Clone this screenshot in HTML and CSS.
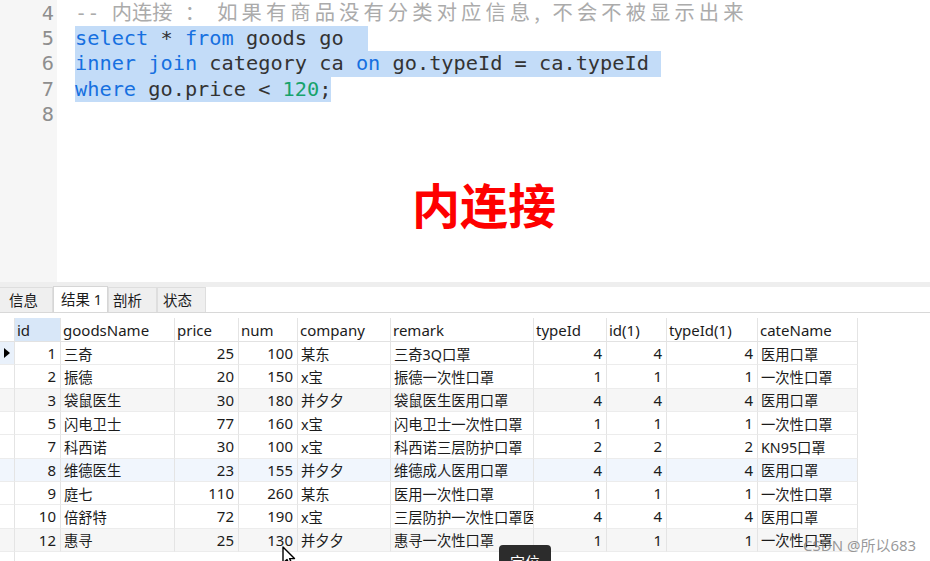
FILE: index.html
```html
<!DOCTYPE html>
<html lang="zh-CN">
<head>
<meta charset="utf-8">
<title>内连接</title>
<link rel="stylesheet" href="styles.css">
</head>
<body>
<div class="app">
  <div class="editor">
    <div class="gutter">
      <div class="ln">4</div>
      <div class="ln">5</div>
      <div class="ln">6</div>
      <div class="ln">7</div>
      <div class="ln">8</div>
    </div>
    <div class="code">
      <div class="line"><span class="cm">-- <span class="cj">内连接</span> ： <span class="cj wide">如果有商品没有分类对应信息, 不会不被显示出来</span></span></div>
      <div class="line"><span class="sel"><span class="kw">select</span> * <span class="kw">from</span> goods go  </span></div>
      <div class="line"><span class="sel"><span class="kw">inner</span> <span class="kw">join</span> category ca <span class="kw">on</span> go.typeId = ca.typeId </span></div>
      <div class="line"><span class="sel"><span class="kw">where</span> go.price &lt; <span class="num">120</span>;</span></div>
      <div class="line"> </div>
    </div>
  </div>
  <div class="splitter"></div>
  <div class="tabbar">
    <div class="tab t1">信息</div>
    <div class="tab t2 active">结果 1</div>
    <div class="tab t3">剖析</div>
    <div class="tab t4">状态</div>
  </div>
  <div class="results">
    <div class="grid">
      <div class="h ind"></div>
      <div class="h hid">id</div>
      <div class="h">goodsName</div>
      <div class="h">price</div>
      <div class="h">num</div>
      <div class="h">company</div>
      <div class="h">remark</div>
      <div class="h">typeId</div>
      <div class="h">id(1)</div>
      <div class="h">typeId(1)</div>
      <div class="h">cateName</div>

      <div class="c ind cur"><svg class="arrow" width="6" height="10" viewBox="0 0 6 10"><path d="M0 0 L6 5 L0 10 Z" fill="#000"/></svg></div>
      <div class="c r">1</div><div class="c">三奇</div><div class="c r">25</div><div class="c r">100</div><div class="c">某东</div><div class="c">三奇3Q口罩</div><div class="c r">4</div><div class="c r">4</div><div class="c r">4</div><div class="c">医用口罩</div>

      <div class="c ind"></div>
      <div class="c r">2</div><div class="c">振德</div><div class="c r">20</div><div class="c r">150</div><div class="c">x宝</div><div class="c">振德一次性口罩</div><div class="c r">1</div><div class="c r">1</div><div class="c r">1</div><div class="c">一次性口罩</div>

      <div class="c ind g"></div>
      <div class="c r g">3</div><div class="c g">袋鼠医生</div><div class="c r g">30</div><div class="c r g">180</div><div class="c g">并夕夕</div><div class="c g">袋鼠医生医用口罩</div><div class="c r g">4</div><div class="c r g">4</div><div class="c r g">4</div><div class="c g">医用口罩</div>

      <div class="c ind"></div>
      <div class="c r">5</div><div class="c">闪电卫士</div><div class="c r">77</div><div class="c r">160</div><div class="c">x宝</div><div class="c">闪电卫士一次性口罩</div><div class="c r">1</div><div class="c r">1</div><div class="c r">1</div><div class="c">一次性口罩</div>

      <div class="c ind"></div>
      <div class="c r">7</div><div class="c">科西诺</div><div class="c r">30</div><div class="c r">100</div><div class="c">x宝</div><div class="c">科西诺三层防护口罩</div><div class="c r">2</div><div class="c r">2</div><div class="c r">2</div><div class="c">KN95口罩</div>

      <div class="c ind b"></div>
      <div class="c r b">8</div><div class="c b">维德医生</div><div class="c r b">23</div><div class="c r b">155</div><div class="c b">并夕夕</div><div class="c b">维德成人医用口罩</div><div class="c r b">4</div><div class="c r b">4</div><div class="c r b">4</div><div class="c b">医用口罩</div>

      <div class="c ind"></div>
      <div class="c r">9</div><div class="c">庭七</div><div class="c r">110</div><div class="c r">260</div><div class="c">某东</div><div class="c">医用一次性口罩</div><div class="c r">1</div><div class="c r">1</div><div class="c r">1</div><div class="c">一次性口罩</div>

      <div class="c ind"></div>
      <div class="c r">10</div><div class="c">倍舒特</div><div class="c r">72</div><div class="c r">190</div><div class="c">x宝</div><div class="c">三层防护一次性口罩医</div><div class="c r">4</div><div class="c r">4</div><div class="c r">4</div><div class="c">医用口罩</div>

      <div class="c ind g"></div>
      <div class="c r g">12</div><div class="c g">惠寻</div><div class="c r g">25</div><div class="c r g">130</div><div class="c g">并夕夕</div><div class="c g">惠寻一次性口罩</div><div class="c r g">1</div><div class="c r g">1</div><div class="c r g">1</div><div class="c g">一次性口罩</div>
    </div>
    <div class="filler"></div>
  </div>

  <div class="title">内连接</div>
  <div class="watermark">CSDN @所以683</div>
  <div class="tooltip">定位</div>
  <svg class="cursor" width="14" height="22" viewBox="0 0 14 22"><path d="M1 1 L1 17 L5 13.5 L8 20 L10.5 19 L7.6 12.6 L12.5 12.6 Z" fill="#fff" stroke="#000" stroke-width="1.4" stroke-linejoin="round"/></svg>
</div>
</body>
</html>
```

FILE: styles.css
```css
* { box-sizing: border-box; }
html, body { margin: 0; padding: 0; }
body {
  width: 930px;
  height: 561px;
  overflow: hidden;
  background: #fff;
}
.app {
  position: relative;
  width: 930px;
  height: 561px;
  display: flex;
  flex-direction: column;
  font-family: "Noto Sans", "Noto Sans CJK SC", sans-serif;
  color: #1b1b1b;
}

/* editor */
.editor {
  height: 282px;
  display: flex;
  flex: none;
}
.gutter {
  width: 57px;
  background: #f6f6f6;
  padding-top: 1px;
  padding-right: 3px;
  text-align: right;
  font-family: "DejaVu Sans Mono", "Noto Sans CJK SC", monospace;
  font-size: 20.3px;
  color: #8e8e8e;
}
.ln { height: 25.2px; line-height: 25.2px; }
.code {
  flex: 1;
  padding-left: 18px;
  padding-top: 1px;
  font-family: "DejaVu Sans Mono", "Noto Sans CJK SC", monospace;
  font-size: 20.3px;
  color: #333;
}
.line {
  height: 25.2px;
  line-height: 25.2px;
  white-space: pre;
}
.sel {
  display: inline-block;
  vertical-align: top;
  height: 25.2px;
  background: #c3dcf8;
}
.kw { color: #1670e0; }
.num { color: #17a36c; }
.cm { color: #ababab; }
.cj { font-family: "Noto Sans CJK SC", sans-serif; font-size: 20.3px; line-height: 1; }
.wide { letter-spacing: 4.1px; }

.splitter { height: 5px; background: #eeeeee; flex: none; }

/* tabs */
.tabbar {
  height: 26px;
  flex: none;
  display: flex;
  align-items: flex-end;
  border-bottom: 1px solid #d8d8d8;
  font-size: 14.5px;
}
.tab {
  height: 25px;
  line-height: 24px;
  background: #efefef;
  border: 1px solid #dedede;
  border-bottom: none;
  padding-left: 8px;
  color: #1b1b1b;
  white-space: nowrap;
}
.tab.active { background: #fff; height: 26px; border-color: #d6d6d6; padding-left: 7px; }
.t1 { width: 53px; border-left: none; padding-left: 9px; }
.t2 { width: 55px; }
.t3 { width: 49px; padding-left: 4px; }
.t4 { width: 49px; padding-left: 5px; }

/* results grid */
.results {
  flex: 1;
  display: flex;
  flex-direction: column;
  padding-top: 5px;
  min-height: 0;
}
.grid {
  display: grid;
  grid-template-columns: 15px 46px 114px 64px 59px 93px 143px 73px 60px 91px 100px;
  grid-auto-rows: 23.33px;
  grid-template-rows: 24px;
  font-size: 14.3px;
  width: 858px;
}
.h, .c {
  border-right: 1px solid #e4e4e4;
  border-bottom: 1px solid #ececec;
  padding: 0 2px 0 3px;
  white-space: nowrap;
  overflow: hidden;
  display: flex;
  align-items: center;
}
.h { background: #fff; border-bottom-color: #e2e2e2; padding-left: 2px; font-size: 15px; }
.h.hid { background: #d8e7f8; }
.c.r { justify-content: flex-end; padding-right: 4px; font-size: 15px; }
.c.g { background: #f6f6f6; }
.c.b { background: #f1f6fd; }
.ind { padding: 0; justify-content: center; }
.ind.cur { background: #e9f1fb; }
.arrow { display: block; }
.filler {
  flex: 1;
  width: 15px;
  border-right: 1px solid #e4e4e4;
}

/* overlays */
.title {
  position: absolute;
  left: 412px;
  top: 175px;
  font-family: "Noto Sans CJK SC", sans-serif;
  font-weight: 700;
  font-size: 48px;
  line-height: 56px;
  color: #fe0000;
}
.watermark {
  position: absolute;
  left: 803px;
  top: 535px;
  font-size: 15px;
  line-height: 20px;
  color: rgba(120, 120, 120, 0.75);
}
.tooltip {
  position: absolute;
  left: 499px;
  top: 545px;
  width: 52px;
  height: 26px;
  border-radius: 4px;
  background: #2c2c2c;
  color: #fff;
  font-size: 15px;
  line-height: 15px;
  padding-top: 10px;
  text-align: center;
}
.cursor {
  position: absolute;
  left: 282px;
  top: 546px;
}
```
